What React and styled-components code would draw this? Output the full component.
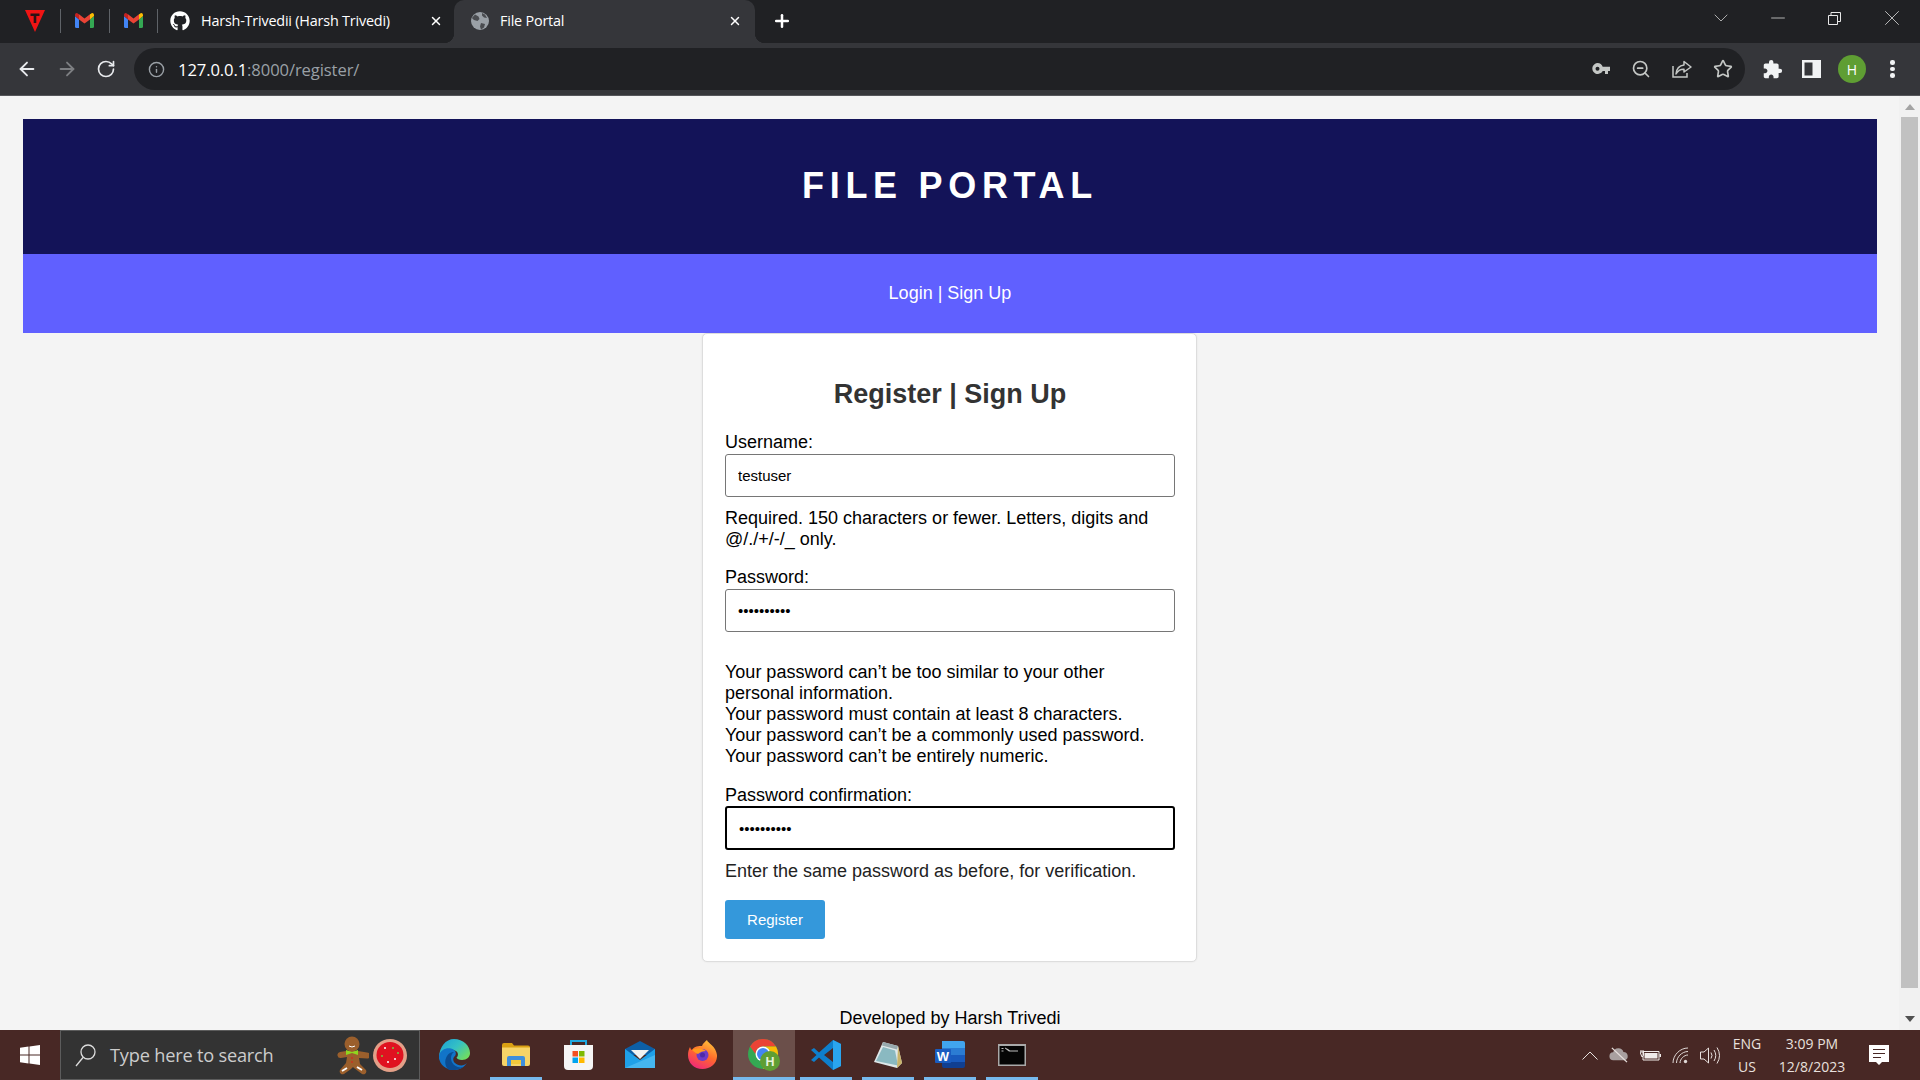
import React from 'react'
import styled, { createGlobalStyle } from 'styled-components'
import { FaGithub } from 'react-icons/fa'
import { MdExtension } from 'react-icons/md'
import { ArrowLeft, ArrowRight, RotateCw, Info, ZoomOut, Star, Plus, X, ChevronDown, Minus } from 'lucide-react'

const GlobalStyle = createGlobalStyle`
  html, body {
    margin: 0;
    padding: 0;
    width: 1920px;
    height: 1080px;
    overflow: hidden;
    background: #f4f4f4;
  }
  * { box-sizing: border-box; }
`

const uiFont = `'Open Sans', 'Noto Sans', sans-serif`
const pageFont = `'Liberation Sans', Arial, sans-serif`

const Screen = styled('div')`
  display: flex;
  flex-direction: column;
  width: 1920px;
  height: 1080px;
`

/* ---------- tab strip ---------- */
const TabStrip = styled('div')`
  display: flex;
  align-items: center;
  height: 43px;
  background: #202124;
  color: #fff;
  font-family: ${uiFont};
  flex: none;
`

const PinnedTab = styled('div')`
  display: flex;
  align-items: center;
  justify-content: center;
  width: ${p => p.$w || 47.5}px;
  height: 43px;
  padding-left: ${p => p.$pl || 0}px;
  padding-bottom: 2px;
  flex: none;
`

const Sep = styled('div')`
  width: 1px;
  height: 24px;
  margin-bottom: 2px;
  background: #5f6368;
  flex: none;
`

const Tab = styled('div')`
  position: relative;
  display: flex;
  align-items: center;
  height: 43px;
  width: ${p => p.$w}px;
  flex: none;
  padding-left: ${p => p.$pl}px;
  padding-bottom: 2px;
  font-size: 14.4px;
  letter-spacing: -0.2px;
  border-radius: 10px 10px 0 0;
  background: ${p => (p.$active ? '#35363a' : 'transparent')};
  ${p =>
    p.$active &&
    `
    &::before, &::after {
      content: '';
      position: absolute;
      bottom: 0;
      width: 10px;
      height: 10px;
    }
    &::before { left: -10px; background: radial-gradient(circle at 0 0, #202124 10px, #35363a 10.5px); }
    &::after { right: -10px; background: radial-gradient(circle at 100% 0, #202124 10px, #35363a 10.5px); }
  `}
`

const TabTitle = styled('span')`
  margin-left: ${p => p.$ml}px;
  white-space: nowrap;
  flex: 1;
`

const TabClose = styled('span')`
  display: flex;
  width: 14px;
  margin-right: ${p => p.$mr}px;
  flex: none;
`

const NewTab = styled('div')`
  display: flex;
  margin-left: 17px;
  padding-bottom: 2px;
`

const WindowControls = styled('div')`
  display: flex;
  align-items: center;
  margin-left: auto;
  color: #e8e8e8;
  padding-bottom: 7px;
`

const WindowControl = styled('div')`
  display: flex;
  align-items: center;
  justify-content: center;
  width: 57px;
`

/* ---------- toolbar ---------- */
const Toolbar = styled('div')`
  display: flex;
  align-items: center;
  height: 53px;
  flex: none;
  background: #35363a;
  border-bottom: 1px solid #55565a;
`

const NavButtons = styled('div')`
  display: flex;
  align-items: center;
  gap: 18px;
  padding-left: 16px;
  width: 135px;
  flex: none;
  color: #e8eaed;
`

const Omnibox = styled('div')`
  display: flex;
  align-items: center;
  width: 1611px;
  height: 42px;
  margin-left: -1px;
  background: #202124;
  border-radius: 21px;
  padding: 0 12px 0 14px;
  flex: none;
`

const SecurityIcon = styled('span')`
  display: flex;
  color: #9aa0a6;
  margin-right: 13px;
`

const Url = styled('div')`
  font-family: ${uiFont};
  font-size: 16.6px;
  letter-spacing: -0.1px;
  color: #fff;
  white-space: nowrap;
`

const UrlDim = styled('span')`
  color: #9aa0a6;
`

const OmniActions = styled('div')`
  display: flex;
  align-items: center;
  gap: 21px;
  margin-left: auto;
  color: #c4c7c5;
`

const ToolActions = styled('div')`
  display: flex;
  align-items: center;
  margin-left: 17px;
  gap: 19px;
  color: #f1f3f4;
`

const Avatar = styled('div')`
  display: flex;
  align-items: center;
  justify-content: center;
  width: 28px;
  height: 28px;
  border-radius: 50%;
  background: #5f9e33;
  color: #fff;
  font-family: ${uiFont};
  font-size: 14px;
  margin-left: -2px;
`

const Dots = styled('div')`
  display: flex;
  flex-direction: column;
  gap: 2px;
  margin-left: 5px;
`

const Dot = styled('i')`
  display: block;
  width: 4.5px;
  height: 4.5px;
  border-radius: 50%;
  background: #f1f3f4;
`

/* ---------- page ---------- */
const Viewport = styled('div')`
  display: flex;
  flex: 1;
  min-height: 0;
`

const Page = styled('div')`
  width: 1899px;
  flex: none;
  padding: 23px 22px 0 23px;
  overflow: hidden;
  background: #f4f4f4;
  font-family: ${pageFont};
  color: #000;
`

const SiteHeader = styled('header')`
  display: flex;
  align-items: center;
  justify-content: center;
  height: 135px;
  padding-bottom: 2px;
  background: #131358;
  color: #fff;
  font-size: 36px;
  font-weight: 700;
  letter-spacing: 5.7px;
`

const SiteNav = styled('nav')`
  display: flex;
  justify-content: center;
  height: 79px;
  padding-top: 29px;
  background: #6060ff;
  color: #fff;
  font-size: 18px;
`

const Card = styled('main')`
  width: 495px;
  margin-left: 679px;
  padding: 0 21px 0 22px;
  height: 629px;
  background: #fff;
  border: 1px solid #ddd;
  border-radius: 5px;
  box-shadow: 0 0 2px rgba(0, 0, 0, 0.08);
`

const Heading = styled('h2')`
  margin: 45px 0 22px;
  font-size: 27px;
  line-height: 31px;
  font-weight: 700;
  text-align: center;
  color: #333;
`

const Label = styled('label')`
  display: block;
  font-size: 18px;
  line-height: 21px;
  height: ${p => p.$h || 22}px;
`

const Input = styled('input')`
  display: block;
  width: 100%;
  height: ${p => (p.$focus ? 44 : 43)}px;
  margin: 0;
  padding: 0 12px;
  font-family: ${pageFont};
  font-size: 15px;
  color: #000;
  background: #fff;
  border: ${p => (p.$focus ? '2px solid #000' : '1px solid #767676')};
  border-radius: 3px;
  outline: none;
`

const Help = styled('div')`
  margin: ${p => p.$top}px 0 ${p => p.$bottom}px;
  font-size: 18px;
  line-height: 21px;
  color: ${p => p.$color || '#000'};
`

const Submit = styled('button')`
  display: block;
  width: 100px;
  height: 39px;
  padding: 0;
  border: 0;
  border-radius: 3px;
  background: #3498db;
  color: #fff;
  font-family: ${pageFont};
  font-size: 15px;
`

const Footer = styled('footer')`
  margin-top: 46px;
  text-align: center;
  font-size: 18px;
  line-height: 21px;
`

const Scrollbar = styled('div')`
  display: flex;
  flex-direction: column;
  align-items: center;
  width: 21px;
  flex: none;
  background: #f1f1f1;
`

const ScrollArrow = styled('div')`
  height: 21px;
  display: flex;
  align-items: center;
  justify-content: center;
  flex: none;
  margin-bottom: ${p => p.$mb || 0}px;
`

const ScrollThumb = styled('div')`
  width: 17px;
  height: 871px;
  background: #c1c1c1;
  margin-bottom: auto;
`

/* ---------- taskbar ---------- */
const Taskbar = styled('div')`
  display: flex;
  align-items: stretch;
  height: 50px;
  flex: none;
  background: #482825;
  color: #fff;
  font-family: ${uiFont};
`

const StartButton = styled('div')`
  display: flex;
  align-items: center;
  justify-content: center;
  width: 60px;
  flex: none;
`

const SearchBox = styled('div')`
  display: flex;
  align-items: center;
  width: 360px;
  flex: none;
  padding-left: 14px;
  background: #333;
  border: 1px solid #5c5c5c;
  color: #ccc;
  font-size: 18.2px;
`

const SearchText = styled('span')`
  margin-left: 14px;
  letter-spacing: -0.2px;
`

const SearchArt = styled('div')`
  display: flex;
  align-items: center;
  gap: 4px;
  margin-left: auto;
  margin-right: 12px;
`

const TaskIcons = styled('div')`
  display: flex;
  margin-left: 3px;
`

const TaskSlot = styled('div')`
  position: relative;
  display: flex;
  align-items: center;
  justify-content: center;
  width: 62px;
  padding-bottom: 1px;
  background: ${p => (p.$active ? '#6b4f4a' : 'transparent')};
  ${p =>
    p.$open &&
    `
    &::after {
      content: '';
      position: absolute;
      bottom: 0;
      left: ${p.$active ? 0 : 5}px;
      right: ${p.$active ? 0 : 5}px;
      height: 3px;
      background: #76b9ed;
    }
  `}
`

const Tray = styled('div')`
  display: flex;
  align-items: center;
  margin-left: auto;
  padding-right: 31px;
  color: #e8e0de;
`

const TrayIcons = styled('div')`
  display: flex;
  align-items: center;
  gap: 11px;
`

const TrayText = styled('div')`
  display: flex;
  flex-direction: column;
  align-items: center;
  width: ${p => p.$w}px;
  margin-left: ${p => p.$ml}px;
  font-size: 14px;
  line-height: 23px;
  white-space: nowrap;
`

const Notify = styled('div')`
  display: flex;
  margin-left: 22px;
`

/* ---------- drawings ---------- */
const GmailIcon = () => (
  <svg width="19" height="15" viewBox="0 0 19 15">
    <path d="M0 3v10.500A1.500 1.500 0 0 0 1.500 15H4V6.500z" fill="#4285f4" />
    <path d="M19 3v10.500a1.500 1.500 0 0 1-1.500 1.500H15V6.500z" fill="#34a853" />
    <path d="M0 3 4 6.500V1.200L2.600.4C1.400-.4 0 .6 0 2z" fill="#c5221f" />
    <path d="M19 3l-4 3.500V1.200l1.400-.8C17.600-.4 19 .6 19 2z" fill="#fbbc04" />
    <path d="M4 1.200 9.500 5.500 15 1.200V6.500L9.500 10.500 4 6.500z" fill="#ea4335" />
  </svg>
)

const VivaldiLikeIcon = () => (
  <svg width="20" height="24" viewBox="0 0 20 24">
    <path d="M0 1h20L10 23z" fill="#f01414" />
    <path d="M5.500 4.500h9v2.500h-3.200v7h-2.600v-7H5.500z" fill="#2a1215" />
  </svg>
)

const Globe = () => (
  <svg width="18" height="18" viewBox="0 0 18 18">
    <circle cx="9" cy="9" r="9" fill="#9aa0a6" />
    <path d="M4 2.500 7.500 4.500 8.500 7 6.500 9 3 8 .9 6zM10 11l4 1-1 3.500-3 2-1-3zM11 1l3 1.500 2 3.500-3-.5-2-2z" fill="#4a4c50" />
  </svg>
)

const KeyIcon = () => (
  <svg width="18" height="12" viewBox="0 0 18 12">
    <path d="M5.500 0a5.500 5.500 0 0 1 5.200 3.800H18V8h-2v3h-3V8h-2.300A5.500 5.500 0 1 1 5.500 0zm0 3.800a1.900 1.900 0 1 0 0 4 1.900 1.900 0 0 0 0-4z" fill="#c4c7c5" fillRule="evenodd" />
  </svg>
)

const ShareIcon = () => (
  <svg width="20" height="18" viewBox="0 0 20 18" fill="none" stroke="#c4c7c5" strokeWidth="1.500">
    <path d="M1 6v11h14v-4" />
    <path d="M12 1.500 19 7l-7 5V9.200C8.500 9 6 10.500 4 14c.5-5 3-8.500 8-9z" strokeLinejoin="round" />
  </svg>
)

const SidePanelIcon = () => (
  <svg width="19" height="18" viewBox="0 0 19 18">
    <path d="M0 0h19v18H0z" fill="#f1f3f4" />
    <path d="M2.500 2.500h8v13h-8z" fill="#35363a" />
  </svg>
)

const RestoreIcon = () => (
  <svg width="13" height="13" viewBox="0 0 13 13" fill="none" stroke="#e8e8e8">
    <path d="M.5 3.500h9v9h-9z" />
    <path d="M3 3.500V.5h9.500v9H9.500" />
  </svg>
)

const WindowsLogo = () => (
  <svg width="20" height="20" viewBox="0 0 20 20">
    <path d="M0 2.800 8.500 1.600v8H0zM9.500 1.500 20 0v9.600H9.500zM0 10.500h8.500v8L0 17.300zM9.500 10.500H20V20L9.500 18.600z" fill="#fff" />
  </svg>
)

const SearchGlass = () => (
  <svg width="21" height="23" viewBox="0 0 21 23" fill="none" stroke="#ddd" strokeWidth="1.300">
    <circle cx="13" cy="8" r="7" />
    <path d="M8 13.500 1 22" />
  </svg>
)

const Gingerbread = () => (
  <svg width="32" height="40" viewBox="0 0 32 40">
    <g fill="#9b5f2c">
      <circle cx="15" cy="9" r="7.500" />
      <path d="M9 16h12l9 1.500a3 3 0 0 1 0 6L22 23l1 6 6 6a3 3 0 0 1-4 4l-8-6-1-1-2 2-7 5a3 3 0 0 1-4-4l6-7 1-6-6 1a3 3 0 0 1-1-6z" />
    </g>
    <path d="M9 15l6 2 6-2v5l-6-2-6 2z" fill="#8fd61f" />
    <path d="M12 11q3 2 6 0" stroke="#fff" fill="none" />
    <path d="M5 36l5-3M20 32l5 3" stroke="#fff" strokeWidth="2" />
    <circle cx="15" cy="23" r="1" fill="#c8321f" />
    <circle cx="15" cy="27" r="1" fill="#c8321f" />
  </svg>
)

const Cookie = () => (
  <svg width="34" height="33" viewBox="0 0 34 33">
    <ellipse cx="17" cy="16.500" rx="17" ry="16.500" fill="#e3a088" />
    <ellipse cx="17" cy="16" rx="13.500" ry="13" fill="#e01220" />
    <g fill="#fff">
      <circle cx="12" cy="9" r="1" />
      <circle cx="22" cy="20" r="1" />
      <circle cx="15" cy="23" r="1" />
    </g>
    <g fill="#7dc242">
      <circle cx="20" cy="9" r="1" />
      <circle cx="9" cy="17" r="1" />
      <circle cx="25" cy="14" r="1" />
    </g>
  </svg>
)

const Edge = () => (
  <svg width="31" height="31" viewBox="0 0 31 31">
    <defs>
      <linearGradient id="edgeTop" x1="0" y1="0" x2="1" y2="0.700">
        <stop offset="0" stopColor="#1a9fd8" />
        <stop offset="0.550" stopColor="#35c1c4" />
        <stop offset="1" stopColor="#6fdc63" />
      </linearGradient>
    </defs>
    <path d="M15 0c9 0 16 6.500 16 14 0 4-3 7-8 7-3 0-5-1-5.500-2.500 2-1.500 2-5-.5-6.500C12 9.500 6 11 3 15 1.500 17 .5 19 0 21-.5 9 6 0 15 0z" fill="url(#edgeTop)" />
    <path d="M0 17C1 11 7 8.500 12 9.500c5 1 6 5.500 3.500 8-1.500 1.500-2 4 .5 6.500 3 3 9 3.500 12 0-3 4.500-8 7-13 7C7 31-.5 25 0 17z" fill="#1174c9" />
    <path d="M10 31c-4-3-5-9-2-14 1.500-2.500 4-4 7-4-4 3-3.500 8-1.500 11 2 3 5.500 5.500 11 4-3 2-9 4-14.500 3z" fill="#0b4c92" />
  </svg>
)

const Explorer = () => (
  <svg width="28" height="23" viewBox="0 0 28 23">
    <path d="M0 2a2 2 0 0 1 2-2h8l2 2.500h14a2 2 0 0 1 2 2V8H0z" fill="#d9a013" />
    <path d="M0 4.500h28V21a2 2 0 0 1-2 2H2a2 2 0 0 1-2-2z" fill="#f6d468" />
    <path d="M5 23v-8a2 2 0 0 1 2-2h14a2 2 0 0 1 2 2v8h-4v-6H9v6z" fill="#3f8fdc" />
    <path d="M9 17h10v4H9z" fill="#f3c83b" />
  </svg>
)

const Store = () => (
  <svg width="29" height="30" viewBox="0 0 29 30">
    <path d="M7 6V1h15v5" fill="none" stroke="#1fa8e0" strokeWidth="2" />
    <path d="M0 5h29v21a4 4 0 0 1-4 4H4a4 4 0 0 1-4-4z" fill="#f5f5f5" />
    <path d="M8.500 11h5.500v5.500H8.500z" fill="#f25022" />
    <path d="M15 11h5.500v5.500H15z" fill="#7fba00" />
    <path d="M8.500 17.500h5.500V23H8.500z" fill="#00a4ef" />
    <path d="M15 17.500h5.500V23H15z" fill="#ffb900" />
  </svg>
)

const Mail = () => (
  <svg width="30" height="27" viewBox="0 0 30 27">
    <path d="M0 8 15 0l15 8v6H0z" fill="#0d5fa6" />
    <path d="M6 9h18L15 18z" fill="#f2f2f2" />
    <path d="M0 8l15 11L30 8v19H0z" fill="#1fa0e8" />
    <path d="M0 27l30-13v13z" fill="#45b6f0" />
  </svg>
)

const Firefox = () => (
  <svg width="29" height="29" viewBox="0 0 29 29">
    <defs>
      <linearGradient id="ffBody" x1="0.800" y1="0" x2="0.300" y2="1">
        <stop offset="0" stopColor="#ffc83a" />
        <stop offset="0.500" stopColor="#ff6a2b" />
        <stop offset="1" stopColor="#f0287a" />
      </linearGradient>
    </defs>
    <path d="M19 0c.5 3 9 6 10 15 .5 8-6 14-14.500 14S0 23 0 15c0-3 .8-6 2-8 .5 1.500 1 2.500 2 3 2-4 7-4 10-4 1-3 3-4 5-6z" fill="url(#ffBody)" />
    <circle cx="14.500" cy="15" r="6" fill="#6b3bc9" />
    <path d="M4 10c3-2 9-3 14 1-3 0-6 1-8 3-2-1-4-2-6-4z" fill="#ff9a1f" />
    <circle cx="14.500" cy="15" r="2.500" fill="#4c2aa8" />
  </svg>
)

const ChromeBadge = () => (
  <svg width="32" height="32" viewBox="0 0 32 32">
    <circle cx="15" cy="15" r="15" fill="#34a853" />
    <path d="M2 7.500a15 15 0 0 1 26 0H15a7.500 7.500 0 0 0-7.500 7.500z" fill="#ea4335" />
    <path d="M28 7.500A15 15 0 0 1 15 30l6.500-11.500A7.500 7.500 0 0 0 15 7.500z" fill="#fbbc04" />
    <circle cx="15" cy="15" r="7.500" fill="#fff" />
    <circle cx="15" cy="15" r="6" fill="#4285f4" />
    <circle cx="22" cy="22" r="10" fill="#5f9e33" />
    <text x="22" y="26.500" textAnchor="middle" fontFamily="'Liberation Sans', sans-serif" fontSize="12.500" fontWeight="700" fill="#e8f2dd">H</text>
  </svg>
)

const VSCode = () => (
  <svg width="30" height="30" viewBox="0 0 30 30">
    <path d="M22 0l8 4v22l-8 4L8 17.500 3 22l-3-2 5.500-5L0 10l3-2 5 4.500zM22 8l-9 7 9 7z" fill="#0e7fcc" fillRule="evenodd" />
    <path d="M22 0l8 4v22l-8 4z" fill="#2aa5ee" />
  </svg>
)

const Notepad = () => (
  <svg width="28" height="26" viewBox="0 0 28 26">
    <path d="M9 0l15 4 4 17-5 5L0 20z" fill="#dfe8ea" />
    <path d="M9 0l15 4-1 3.500L8 3.500z" fill="#98a9ad" />
    <path d="M2 19L9 5l12 3.500 3 15z" fill="#7bb0ba" opacity="0.850" />
    <path d="M23 26l1-22 4 17z" fill="#c9b36a" />
  </svg>
)

const Word = () => (
  <svg width="30" height="27" viewBox="0 0 30 27">
    <path d="M7 0h21a2 2 0 0 1 2 2v5H7z" fill="#41a5ee" />
    <path d="M7 7h23v7H7z" fill="#2b7cd3" />
    <path d="M7 14h23v7H7z" fill="#185abd" />
    <path d="M7 21h23v4a2 2 0 0 1-2 2H9a2 2 0 0 1-2-2z" fill="#103f91" />
    <path d="M1 8h14a1 1 0 0 1 1 1v12a1 1 0 0 1-1 1H1a1 1 0 0 1-1-1V9a1 1 0 0 1 1-1z" fill="#1a5cc0" />
    <text x="8" y="19.500" textAnchor="middle" fontFamily="'Liberation Sans', sans-serif" fontSize="13" fontWeight="700" fill="#fff">W</text>
  </svg>
)

const Terminal = () => (
  <svg width="28" height="22" viewBox="0 0 28 22">
    <path d="M0 0h28v22H0z" fill="#a9a9a9" />
    <path d="M1.500 2h25v18.500h-25z" fill="#050505" />
    <path d="M3.500 4h2v1h-2zM3.500 6.500h2v1h-2zM7 3.500l3 1.500 2 1.500h8v1h-9L7 4.500z" fill="#bdbdbd" />
  </svg>
)

const TrayChevron = () => (
  <svg width="16" height="9" viewBox="0 0 16 9" fill="none" stroke="#e8e0de">
    <path d="M.5 8.500 8 1l7.500 7.500" />
  </svg>
)

const Cloud = () => (
  <svg width="20" height="16" viewBox="0 0 22 18">
    <path d="M5 15a4.500 4.500 0 0 1-.5-9A6 6 0 0 1 16 5.500a4.800 4.800 0 0 1 1 9.500z" fill="#a9a0a0" />
    <path d="M3 1l17 16" stroke="#e8e0de" strokeWidth="1.500" />
  </svg>
)

const Battery = () => (
  <svg width="21" height="14" viewBox="0 0 21 14" fill="none">
    <path d="M3 3.500h16v8.500H3z" stroke="#f0ebe9" />
    <path d="M4.500 5h13v5.500h-13z" fill="#f0ebe9" />
    <path d="M19.500 6h1.500v3h-1.500z" fill="#f0ebe9" />
    <path d="M0 4h3.500v3.500L2 9zM1 2v2M3 2v2" stroke="#f0ebe9" />
  </svg>
)

const Wifi = () => (
  <svg width="17" height="17" viewBox="0 0 17 17" fill="none" stroke="#e0d8d6">
    <path d="M1 16C1 8 8 1 16 1M4.500 16C4.500 10 10 4.500 16 4.500M8 16c0-4 4-8 8-8" />
    <circle cx="13.500" cy="14.500" r="1.700" fill="#e0d8d6" stroke="none" />
  </svg>
)

const Speaker = () => (
  <svg width="20" height="19" viewBox="0 0 20 19" fill="none" stroke="#e8e0de">
    <path d="M.5 6h3.500L8.500 2v15L4 13H.5z" />
    <path d="M11 6.500q2 3 0 6M14 4q3.500 5.500 0 11M17 1.500q5 8 0 16" />
  </svg>
)

const NotifyIcon = () => (
  <svg width="20" height="20" viewBox="0 0 20 20">
    <path d="M0 0h20v17h-7l-3 3-3-3H0z" fill="#fff" />
    <path d="M4 4.500h12M4 8.500h12M4 12.500h8" stroke="#482825" />
  </svg>
)

const ArrowTri = ({ down, color }) => (
  <svg width="10" height="6" viewBox="0 0 10 6">
    <path d={down ? 'M0 0h10L5 6z' : 'M0 6h10L5 0z'} fill={color} />
  </svg>
)

const apps = [
  { id: 'edge', icon: <Edge /> },
  { id: 'explorer', icon: <Explorer />, open: true },
  { id: 'store', icon: <Store /> },
  { id: 'mail', icon: <Mail /> },
  { id: 'firefox', icon: <Firefox /> },
  { id: 'chrome', icon: <ChromeBadge />, open: true, active: true },
  { id: 'vscode', icon: <VSCode />, open: true },
  { id: 'notepad', icon: <Notepad />, open: true },
  { id: 'word', icon: <Word />, open: true },
  { id: 'terminal', icon: <Terminal />, open: true },
]

const App = () => {
  return (
    <Screen>
      <GlobalStyle />
      <TabStrip>
        <PinnedTab $w={60} $pl={10}>
          <VivaldiLikeIcon />
        </PinnedTab>
        <Sep />
        <PinnedTab>
          <GmailIcon />
        </PinnedTab>
        <Sep />
        <PinnedTab>
          <GmailIcon />
        </PinnedTab>
        <Sep />
        <Tab $w={296} $pl={12}>
          <FaGithub size={20} color="#fff" />
          <TabTitle $ml={11}>Harsh-Trivedii (Harsh Trivedi)</TabTitle>
          <TabClose $mr={11}>
            <X size={14} strokeWidth={2.5} />
          </TabClose>
        </Tab>
        <Tab $active $w={301} $pl={17}>
          <Globe />
          <TabTitle $ml={11}>File Portal</TabTitle>
          <TabClose $mr={13}>
            <X size={14} strokeWidth={2.5} />
          </TabClose>
        </Tab>
        <NewTab>
          <Plus size={20} strokeWidth={3} />
        </NewTab>
        <WindowControls>
          <WindowControl>
            <ChevronDown size={24} strokeWidth={0.7} />
          </WindowControl>
          <WindowControl>
            <Minus size={22} strokeWidth={0.8} />
          </WindowControl>
          <WindowControl>
            <RestoreIcon />
          </WindowControl>
          <WindowControl>
            <X size={26} strokeWidth={0.7} />
          </WindowControl>
        </WindowControls>
      </TabStrip>
      <Toolbar>
        <NavButtons>
          <ArrowLeft size={22} />
          <ArrowRight size={22} color="#7d7f82" />
          <RotateCw size={20} />
        </NavButtons>
        <Omnibox>
          <SecurityIcon>
            <Info size={17} />
          </SecurityIcon>
          <Url>
            127.0.0.1<UrlDim>:8000/register/</UrlDim>
          </Url>
          <OmniActions>
            <KeyIcon />
            <ZoomOut size={20} />
            <ShareIcon />
            <Star size={20} />
          </OmniActions>
        </Omnibox>
        <ToolActions>
          <MdExtension size={21} />
          <SidePanelIcon />
          <Avatar>H</Avatar>
          <Dots>
            <Dot />
            <Dot />
            <Dot />
          </Dots>
        </ToolActions>
      </Toolbar>
      <Viewport>
        <Page>
          <SiteHeader>FILE PORTAL</SiteHeader>
          <SiteNav>Login | Sign Up</SiteNav>
          <Card>
            <Heading>Register | Sign Up</Heading>
            <Label>Username:</Label>
            <Input type="text" value="testuser" readOnly />
            <Help $top={11} $bottom={17}>
              Required. 150 characters or fewer. Letters, digits and @/./+/-/_ only.
            </Help>
            <Label>Password:</Label>
            <Input type="password" value="testuser12" readOnly />
            <Help $top={30} $bottom={18}>
              Your password can’t be too similar to your other personal information.
              <br />
              Your password must contain at least 8 characters.
              <br />
              Your password can’t be a commonly used password.
              <br />
              Your password can’t be entirely numeric.
            </Help>
            <Label $h={21}>Password confirmation:</Label>
            <Input $focus type="password" value="testuser12" readOnly />
            <Help $top={11} $bottom={18} $color="#222">
              Enter the same password as before, for verification.
            </Help>
            <Submit type="button">Register</Submit>
          </Card>
          <Footer>Developed by Harsh Trivedi</Footer>
        </Page>
        <Scrollbar>
          <ScrollArrow>
            <ArrowTri color="#a3a3a3" />
          </ScrollArrow>
          <ScrollThumb />
          <ScrollArrow $mb={1}>
            <ArrowTri down color="#505050" />
          </ScrollArrow>
        </Scrollbar>
      </Viewport>
      <Taskbar>
        <StartButton>
          <WindowsLogo />
        </StartButton>
        <SearchBox>
          <SearchGlass />
          <SearchText>Type here to search</SearchText>
          <SearchArt>
            <Gingerbread />
            <Cookie />
          </SearchArt>
        </SearchBox>
        <TaskIcons>
          {apps.map(app => (
            <TaskSlot key={app.id} $open={app.open} $active={app.active}>
              {app.icon}
            </TaskSlot>
          ))}
        </TaskIcons>
        <Tray>
          <TrayIcons>
            <TrayChevron />
            <Cloud />
            <Battery />
            <Wifi />
            <Speaker />
          </TrayIcons>
          <TrayText $w={40} $ml={7}>
            <span>ENG</span>
            <span>US</span>
          </TrayText>
          <TrayText $w={70} $ml={10}>
            <span>3:09 PM</span>
            <span>12/8/2023</span>
          </TrayText>
          <Notify>
            <NotifyIcon />
          </Notify>
        </Tray>
      </Taskbar>
    </Screen>
  )
}

export default App
